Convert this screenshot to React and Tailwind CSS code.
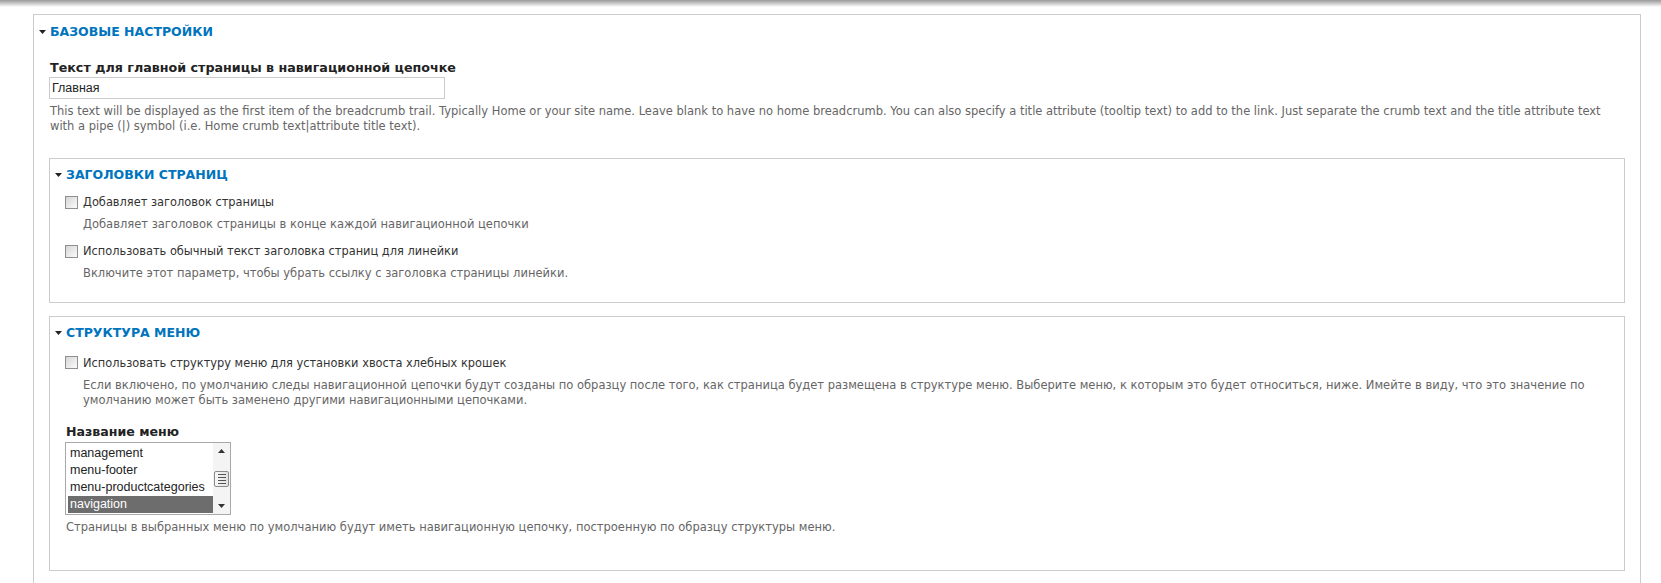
const BASE_FONT = "font-['DejaVu_Sans',Verdana,sans-serif]";

function Triangle() {
  return (
    <svg width="7" height="4" viewBox="0 0 7 4" className="shrink-0">
      <path d="M0 0 L7 0 L3.5 4 Z" fill="#222" />
    </svg>
  );
}

function Legend({ children }) {
  return (
    <div className="flex items-center gap-[4px] h-[16px] -ml-[10px]">
      <Triangle />
      <span className="text-[12.5px] leading-[16px] font-bold uppercase text-[#0074bd]">{children}</span>
    </div>
  );
}

function Checkbox() {
  return (
    <span className="w-[13px] h-[13px] shrink-0 border border-[#8e8f8f] bg-gradient-to-br from-[#d6d6d6] to-[#fbfbfb]" />
  );
}

function CheckItem({ label, desc, first }) {
  return (
    <div className={first ? 'mt-[11px]' : 'mt-[11.5px]'}>
      <div className="flex items-center gap-[5px] h-[16px]">
        <Checkbox />
        <span className="text-[11.4px] leading-[16px] text-[#333]">{label}</span>
      </div>
      <p className="mt-[6.5px] ml-[18px] text-[11.5px] leading-[15px] text-[#666]">{desc}</p>
    </div>
  );
}

const menus = ['management', 'menu-footer', 'menu-productcategories', 'navigation'];

function MenuSelect() {
  return (
    <div className="mt-[2px] w-[166px] h-[73px] border border-[#a9a9a9] bg-white flex font-['Liberation_Sans',Arial,sans-serif]">
      <div className="flex-1 p-[2px] pr-0 overflow-hidden">
        {menus.map((m, i) => (
          <div
            key={m}
            className={`h-[17px] leading-[17px] pl-[2px] text-[12.5px] whitespace-nowrap ${
              i === 3 ? 'bg-[#6d6d6d] text-white' : 'text-[#222]'
            }`}
          >
            {m}
          </div>
        ))}
      </div>
      <div className="w-[17px] bg-[#f4f4f4] flex flex-col items-center">
        <div className="h-[16px] flex items-center justify-center">
          <svg width="7" height="4" viewBox="0 0 7 4"><path d="M0 4 L7 4 L3.5 0 Z" fill="#333" /></svg>
        </div>
        <div className="mt-[12px] w-[15px] h-[16px] border border-[#8a8a8a] rounded-[2px] bg-gradient-to-r from-[#f8f8f8] to-[#e2e2e2] flex flex-col items-center justify-center gap-[2px]">
          <span className="w-[8px] h-px bg-[#555]" />
          <span className="w-[8px] h-px bg-[#555]" />
          <span className="w-[8px] h-px bg-[#555]" />
          <span className="w-[8px] h-px bg-[#555]" />
        </div>
        <div className="mt-auto h-[16px] flex items-center justify-center">
          <svg width="7" height="4" viewBox="0 0 7 4"><path d="M0 0 L7 0 L3.5 4 Z" fill="#333" /></svg>
        </div>
      </div>
    </div>
  );
}

export default function App() {
  return (
    <div className={`min-h-[583px] bg-white overflow-hidden ${BASE_FONT}`}>
      <div className="h-[7px] bg-gradient-to-b from-[#999] to-white" />
      <div className="pt-[7px] pl-[33px] pr-[20px]">
        {/* Базовые настройки */}
        <div className="border border-[#ccc] pt-[9px] px-[15px] pb-[60px]">
          <Legend>Базовые настройки</Legend>

          <label className="block mt-[20px] text-[12.7px] leading-[16px] font-bold text-[#222] pl-px">
            Текст для главной страницы в навигационной цепочке
          </label>
          <input
            type="text"
            defaultValue="Главная"
            className="block mt-px w-[396px] h-[22px] border border-[#ccc] px-[2px] text-[12.5px] text-[#222] font-['Liberation_Sans',Arial,sans-serif] outline-none"
          />
          <p className="mt-[5px] pl-px max-w-[1570px] text-[11.5px] leading-[15px] text-[#666]">
            This text will be displayed as the first item of the breadcrumb trail. Typically Home or your site name. Leave blank to have no home breadcrumb. You can also specify a title attribute (tooltip text) to add to the link. Just separate the crumb text and the title attribute text with a pipe (|) symbol (i.e. Home crumb text|attribute title text).
          </p>

          {/* Заголовки страниц */}
          <div className="mt-[24px] border border-[#ccc] pt-[8px] px-[15px] pb-[21px]">
            <Legend>Заголовки страниц</Legend>
            <CheckItem
              first
              label="Добавляет заголовок страницы"
              desc="Добавляет заголовок страницы в конце каждой навигационной цепочки"
            />
            <CheckItem
              label="Использовать обычный текст заголовка страниц для линейки"
              desc="Включите этот параметр, чтобы убрать ссылку с заголовка страницы линейки."
            />
          </div>

          {/* Структура меню */}
          <div className="mt-[13px] border border-[#ccc] pt-[8px] px-[15px] pb-[35px]">
            <Legend>Структура меню</Legend>
            <div className="mt-[14px]">
              <div className="flex items-center gap-[5px] h-[16px]">
                <Checkbox />
                <span className="text-[11.4px] leading-[16px] text-[#333]">
                  Использовать структуру меню для установки хвоста хлебных крошек
                </span>
              </div>
              <p className="mt-[7px] ml-[18px] text-[11.5px] leading-[15px] text-[#666]">
                Если включено, по умолчанию следы навигационной цепочки будут созданы по образцу после того, как страница будет размещена в структуре меню. Выберите меню, к которым это будет относиться, ниже. Имейте в виду, что это значение по умолчанию может быть заменено другими навигационными цепочками.
              </p>
            </div>

            <label className="block mt-[16px] pl-px text-[12.6px] leading-[16px] font-bold text-[#222]">
              Название меню
            </label>
            <MenuSelect />
            <p className="mt-[5.5px] pl-px text-[11.5px] leading-[15px] text-[#666]">
              Страницы в выбранных меню по умолчанию будут иметь навигационную цепочку, построенную по образцу структуры меню.
            </p>
          </div>
        </div>
      </div>
    </div>
  );
}
